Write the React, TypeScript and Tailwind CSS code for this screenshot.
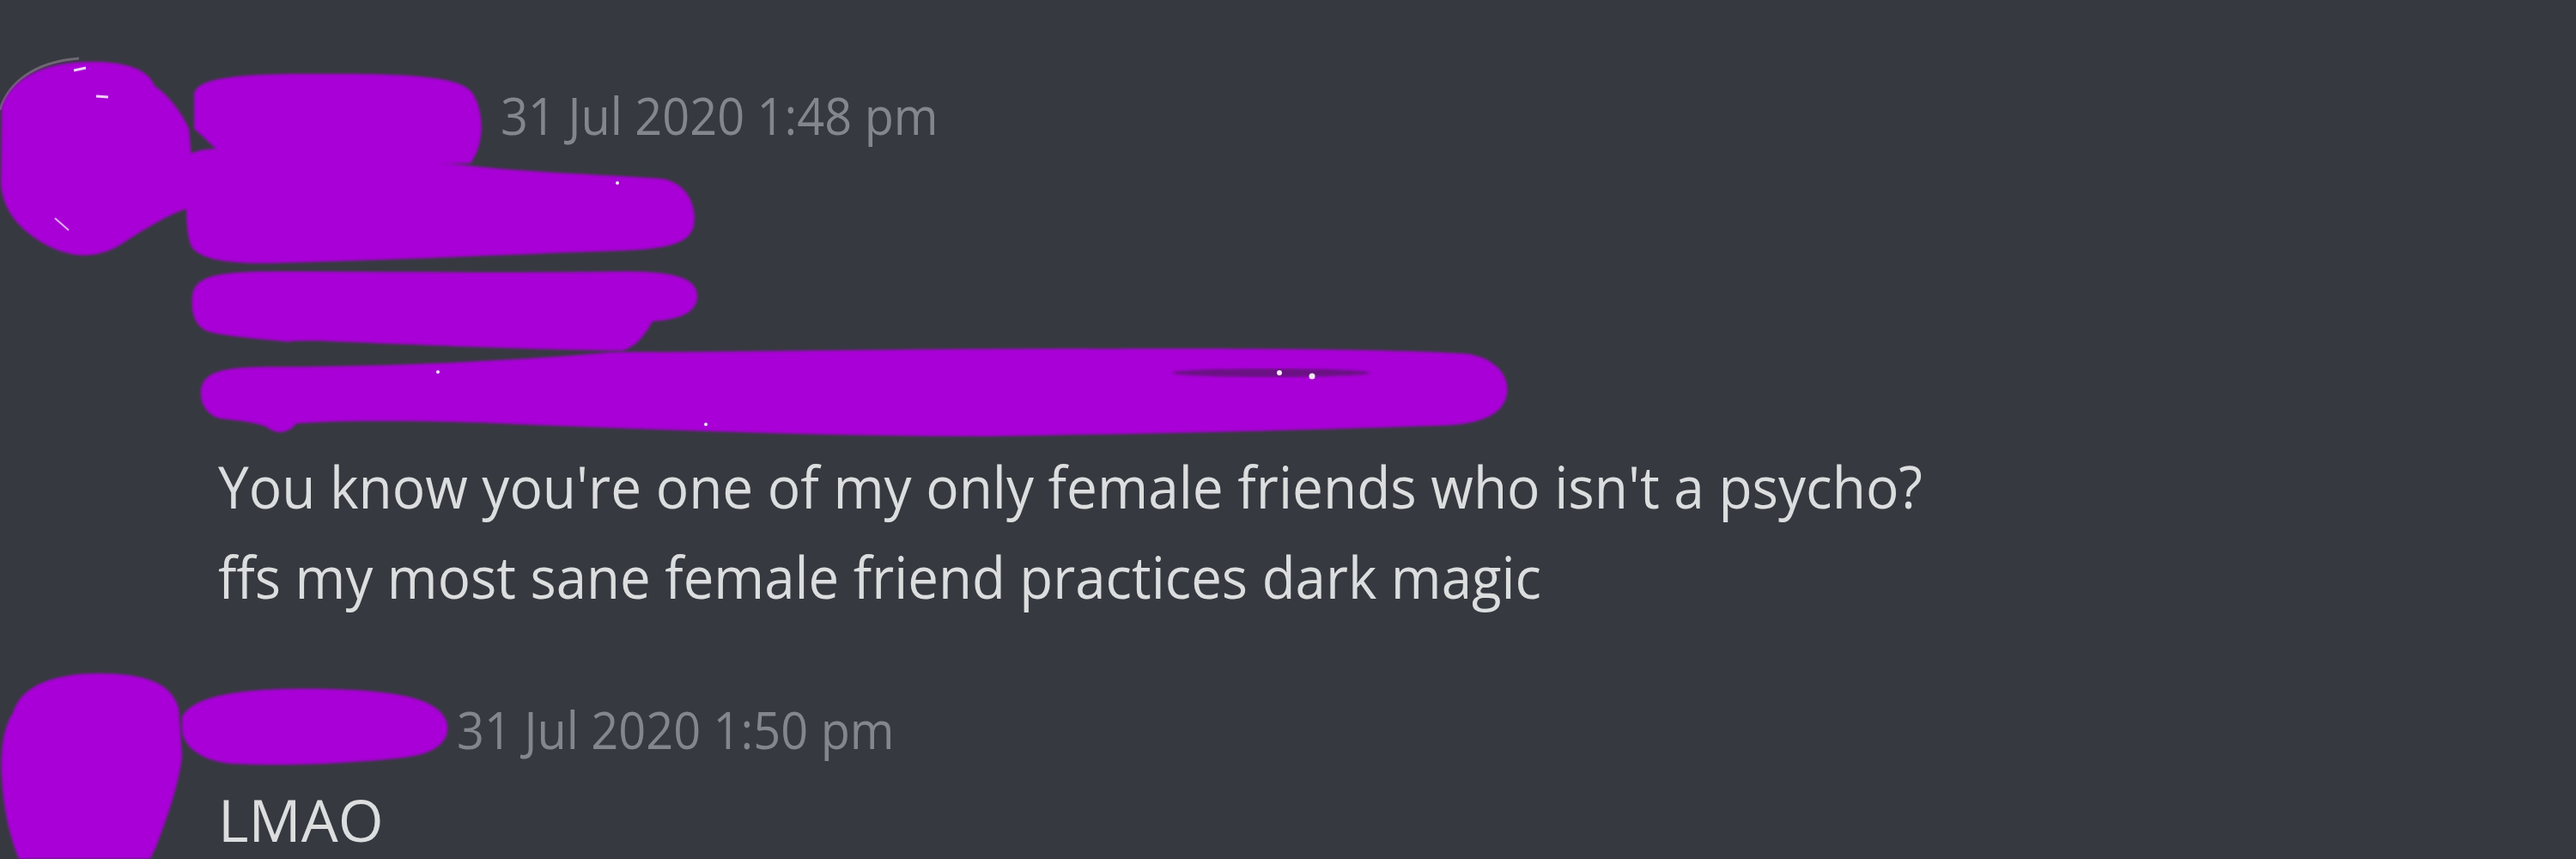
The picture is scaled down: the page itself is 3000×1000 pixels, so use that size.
import React from "react";

const PURPLE = "#a802d6";

function Scribbles() {
  return (
    <svg
      className="absolute inset-0 pointer-events-none"
      width="3000"
      height="1000"
      viewBox="0 0 3000 1000"
    >
      <defs>
        <filter id="soft" x="-5%" y="-5%" width="110%" height="110%">
          <feGaussianBlur stdDeviation="1.8" />
        </filter>
      </defs>
      {/* faint edge of the real avatar peeking out */}
      <path d="M0,128 C10,96 40,72 92,68" stroke="#9d8f9f" strokeWidth="3" fill="none" opacity="0.55" />
      <g fill={PURPLE} filter="url(#soft)">
        {/* message 1 avatar */}
        <path d="M2,125 C12,92 50,73 100,72 C140,71 172,78 180,100 C195,110 210,128 220,150 L228,240 C205,245 175,262 140,285 C110,303 80,300 50,283 C22,266 4,246 1,215 Z" />
        {/* name 1 */}
        <path d="M226,110 C228,90 280,85 380,86 C470,86 535,88 550,108 C563,128 566,165 548,190 L300,195 C260,190 240,160 226,150 Z" />
        {/* hidden line 1 */}
        <path d="M218,185 C220,176 235,173 262,173 L540,192 C600,200 700,203 770,208 C800,212 812,240 808,262 C804,283 780,290 720,292 C600,296 450,303 330,306 C280,308 240,305 225,290 C218,280 217,260 217,240 Z" />
        {/* hidden line 2 */}
        <path d="M224,345 C226,322 250,316 320,316 C450,316 600,318 720,316 C790,315 812,325 812,345 C812,362 795,372 760,374 C750,392 740,404 725,408 C650,408 500,402 400,398 C370,397 350,396 335,398 C300,394 260,392 240,385 C226,378 222,362 224,345 Z" />
        {/* hidden line 3 */}
        <path d="M234,455 C236,432 260,427 320,427 C450,427 600,420 713,410 C900,410 1100,405 1300,406 C1500,405 1650,408 1710,412 C1745,418 1758,440 1755,458 C1752,480 1730,492 1690,495 C1550,500 1350,505 1150,508 C950,508 750,500 560,492 C450,489 380,490 345,493 C338,503 325,506 315,500 C305,492 280,490 255,487 C240,482 233,470 234,455 Z" />
        {/* message 2 avatar */}
        <path d="M15,830 C25,795 70,783 120,784 C170,785 200,795 208,825 L212,880 C208,915 195,950 182,985 L175,1000 L22,1000 C12,975 4,945 2,905 C0,870 5,845 15,830 Z" />
        {/* name 2 */}
        <path d="M212,835 C225,808 290,800 380,802 C460,804 510,812 520,840 C526,862 508,878 470,882 C400,890 320,892 270,889 C235,886 214,870 212,850 Z" />
      </g>
      {/* small marks showing through the scribbles */}
      <ellipse cx="1480" cy="434" rx="115" ry="5" fill="#5b1470" opacity="0.8" filter="url(#soft)" />
      <circle cx="1490" cy="434" r="3" fill="#f3e6f5" />
      <circle cx="1528" cy="438" r="3.5" fill="#f3e6f5" />
      <path d="M112,112 L126,113" stroke="#f0d0f5" strokeWidth="3" />
      <path d="M64,254 L80,268" stroke="#e0b0ea" strokeWidth="2" />
      <path d="M86,82 L100,79" stroke="#f0d0f5" strokeWidth="3" />
      <circle cx="510" cy="433" r="2" fill="#f3e6f5" />
      <circle cx="822" cy="494" r="2" fill="#e8e8ea" />
      <circle cx="719" cy="213" r="2" fill="#e8e8ea" />
    </svg>
  );
}

export default function App() {
  return (
    <div className="relative w-[3000px] h-[1000px] overflow-hidden bg-[#36393f] font-['Open_Sans',sans-serif]">
      <div className="flex flex-col pl-[254px] pt-[69px]">
        {/* message 1 header */}
        <div className="flex h-[129px]">
          <span className="w-[329px] whitespace-nowrap text-[56px] leading-[129px] font-semibold text-white">
            Name
          </span>
          <span className="inline-block origin-left scale-x-[0.916] whitespace-nowrap text-[61px] leading-[129px] text-[#83868d]">
            31 Jul 2020 1:48 pm
          </span>
        </div>
        <div className="h-[105px]" />
        <div className="h-[105px]" />
        <div className="h-[105px]" />
        <div className="h-[105px] whitespace-nowrap text-[68px] leading-[105px] text-[#dcddde]">
          <span className="inline-block origin-left scale-x-[0.94]">
            You know you're one of my only female friends who isn't a psycho?
          </span>
        </div>
        <div className="h-[105px] whitespace-nowrap text-[68px] leading-[105px] text-[#dcddde]">
          <span className="inline-block origin-left scale-x-[0.935]">
            ffs my most sane female friend practices dark magic
          </span>
        </div>

        {/* message 2 header */}
        <div className="mt-[73px] flex h-[105px]">
          <span className="w-[278px] whitespace-nowrap text-[56px] leading-[105px] font-semibold text-white">
            Name
          </span>
          <span className="inline-block origin-left scale-x-[0.916] whitespace-nowrap text-[61px] leading-[105px] text-[#83868d]">
            31 Jul 2020 1:50 pm
          </span>
        </div>
        <div className="h-[105px] whitespace-nowrap text-[68px] leading-[105px] text-[#dcddde]">
          LMAO
        </div>
      </div>
      <Scribbles />
    </div>
  );
}
